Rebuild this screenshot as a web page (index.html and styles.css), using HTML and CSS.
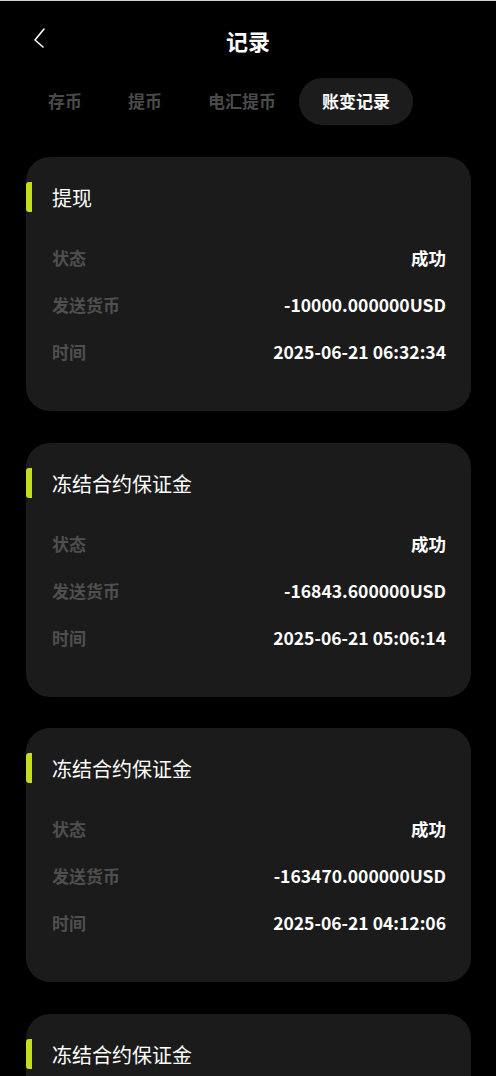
FILE: index.html
```html
<!DOCTYPE html>
<html lang="zh-CN">

<head>
    <meta charset="UTF-8">
    <meta name="viewport" content="width=device-width, initial-scale=1.0">
    <title>记录</title>
    <link rel="stylesheet" href="styles.css">
</head>

<body>
    <header class="topbar">
        <a class="back" href="#">
            <svg width="14" height="22" viewBox="0 0 14 22">
                <path d="M11 2 L2 13 L10 20" fill="none" stroke="#fff" stroke-width="1.6" stroke-linecap="round" stroke-linejoin="round" />
            </svg>
        </a>
        <h1 class="title">记录</h1>
    </header>

    <nav class="tabs">
        <span class="tab">存币</span>
        <span class="tab">提币</span>
        <span class="tab">电汇提币</span>
        <span class="tab active">账变记录</span>
    </nav>

    <main class="list">
        <div class="card">
            <div class="card-head">提现</div>
            <div class="row"><span class="label">状态</span><span class="value">成功</span></div>
            <div class="row"><span class="label">发送货币</span><span class="value">-10000.000000USD</span></div>
            <div class="row"><span class="label">时间</span><span class="value">2025-06-21 06:32:34</span></div>
        </div>

        <div class="card">
            <div class="card-head">冻结合约保证金</div>
            <div class="row"><span class="label">状态</span><span class="value">成功</span></div>
            <div class="row"><span class="label">发送货币</span><span class="value">-16843.600000USD</span></div>
            <div class="row"><span class="label">时间</span><span class="value">2025-06-21 05:06:14</span></div>
        </div>

        <div class="card">
            <div class="card-head">冻结合约保证金</div>
            <div class="row"><span class="label">状态</span><span class="value">成功</span></div>
            <div class="row"><span class="label">发送货币</span><span class="value">-163470.000000USD</span></div>
            <div class="row"><span class="label">时间</span><span class="value">2025-06-21 04:12:06</span></div>
        </div>

        <div class="card">
            <div class="card-head">冻结合约保证金</div>
            <div class="row"><span class="label">状态</span><span class="value">成功</span></div>
            <div class="row"><span class="label">发送货币</span><span class="value">-10000.000000USD</span></div>
            <div class="row"><span class="label">时间</span><span class="value">2025-06-21 03:40:21</span></div>
        </div>
    </main>
</body>

</html>
```

FILE: styles.css
```css
body {
    margin: 0;
    background-color: #000;
    color: #fff;
    font-family: "Noto Sans CJK SC", "Noto Sans", sans-serif;
    border-top: 1px solid #cfcfcf;
    overflow: hidden;
}

.topbar {
    height: 78px;
    display: flex;
    justify-content: center;
    position: relative;
    margin-top: -1px;
}

.back {
    position: absolute;
    left: 33px;
    top: 27px;
    display: flex;
}

.title {
    margin: 0;
    font-size: 22px;
    font-weight: 700;
    line-height: 80px;
    height: 78px;
}

.tabs {
    display: flex;
    padding-left: 25px;
    height: 47px;
}

.tab {
    padding: 0 23px;
    height: 47px;
    line-height: 45px;
    font-size: 17px;
    font-weight: 700;
    color: #4a4a4a;
    border-radius: 24px;
}

.tab.active {
    background-color: #1c1c1c;
    color: #fff;
}

.list {
    padding: 32px 25px 0 26px;
}

.card {
    background-color: #1b1b1b;
    border-radius: 24px;
    padding: 25px 25px 36px 0;
    margin-bottom: 31.5px;
}

.card-head {
    border-left: 6px solid #c6dc1e;
    border-radius: 3px;
    height: 30px;
    line-height: 32px;
    padding-left: 20px;
    font-size: 20px;
    margin-bottom: 22px;
}

.row {
    display: flex;
    justify-content: space-between;
    align-items: center;
    height: 47px;
    padding-left: 26px;
    font-size: 17px;
    font-weight: 700;
}

.label {
    color: #4f4f4f;
}

.value {
    color: #fff;
    font-size: 17.5px;
}
```
